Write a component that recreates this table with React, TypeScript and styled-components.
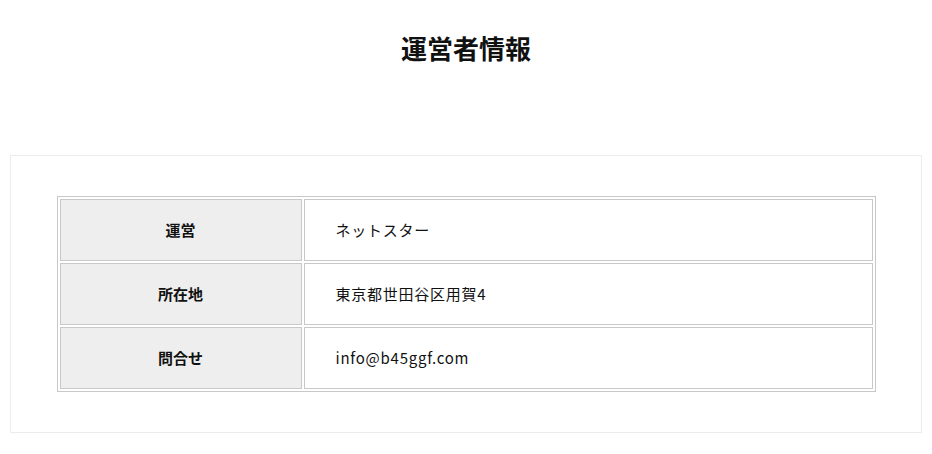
import * as React from 'react';
import styled, { createGlobalStyle } from 'styled-components';

const GlobalStyle = createGlobalStyle`
    body {
        margin: 0;
        background: #fff;
        color: #111;
        font-family: "Noto Sans CJK JP", "Noto Sans", sans-serif;
    }
`;

const Page = styled.div`
    padding: 28px 10px 20px;
`;

const Title = styled.h2`
    margin: 0 0 87px;
    font-size: 26px;
    line-height: 40px;
    font-weight: 700;
    text-align: center;
    color: #111;
`;

const InfoBox = styled.section`
    border: 1px solid #ececec;
    padding: 40px 0;
`;

const InfoTable = styled.table`
    width: 90%;
    margin: 0 auto;
    border: 1px solid #c8c8c8;
    border-spacing: 2px;
    table-layout: fixed;
`;

const HeadCell = styled.th`
    width: 29.6%;
    height: 58px;
    padding: 0 0 2px;
    border: 1px solid #c8c8c8;
    background: #eeeeee;
    font-size: 15px;
    font-weight: 700;
    text-align: center;
    vertical-align: middle;
`;

const DataCell = styled.td`
    height: 58px;
    padding: 0 0 2px 31px;
    border: 1px solid #c8c8c8;
    font-size: 15px;
    letter-spacing: 0.05em;
    vertical-align: middle;
`;

const rows = [
    { label: '運営', value: 'ネットスター' },
    { label: '所在地', value: '東京都世田谷区用賀4' },
    { label: '問合せ', value: 'info@b45ggf.com' },
];

export default function App() {
    return (
        <Page>
            <GlobalStyle />
            <Title>運営者情報</Title>
            <InfoBox>
                <InfoTable>
                    <tbody>
                        {rows.map((row) => (
                            <tr key={row.label}>
                                <HeadCell>{row.label}</HeadCell>
                                <DataCell>{row.value}</DataCell>
                            </tr>
                        ))}
                    </tbody>
                </InfoTable>
            </InfoBox>
        </Page>
    );
}
